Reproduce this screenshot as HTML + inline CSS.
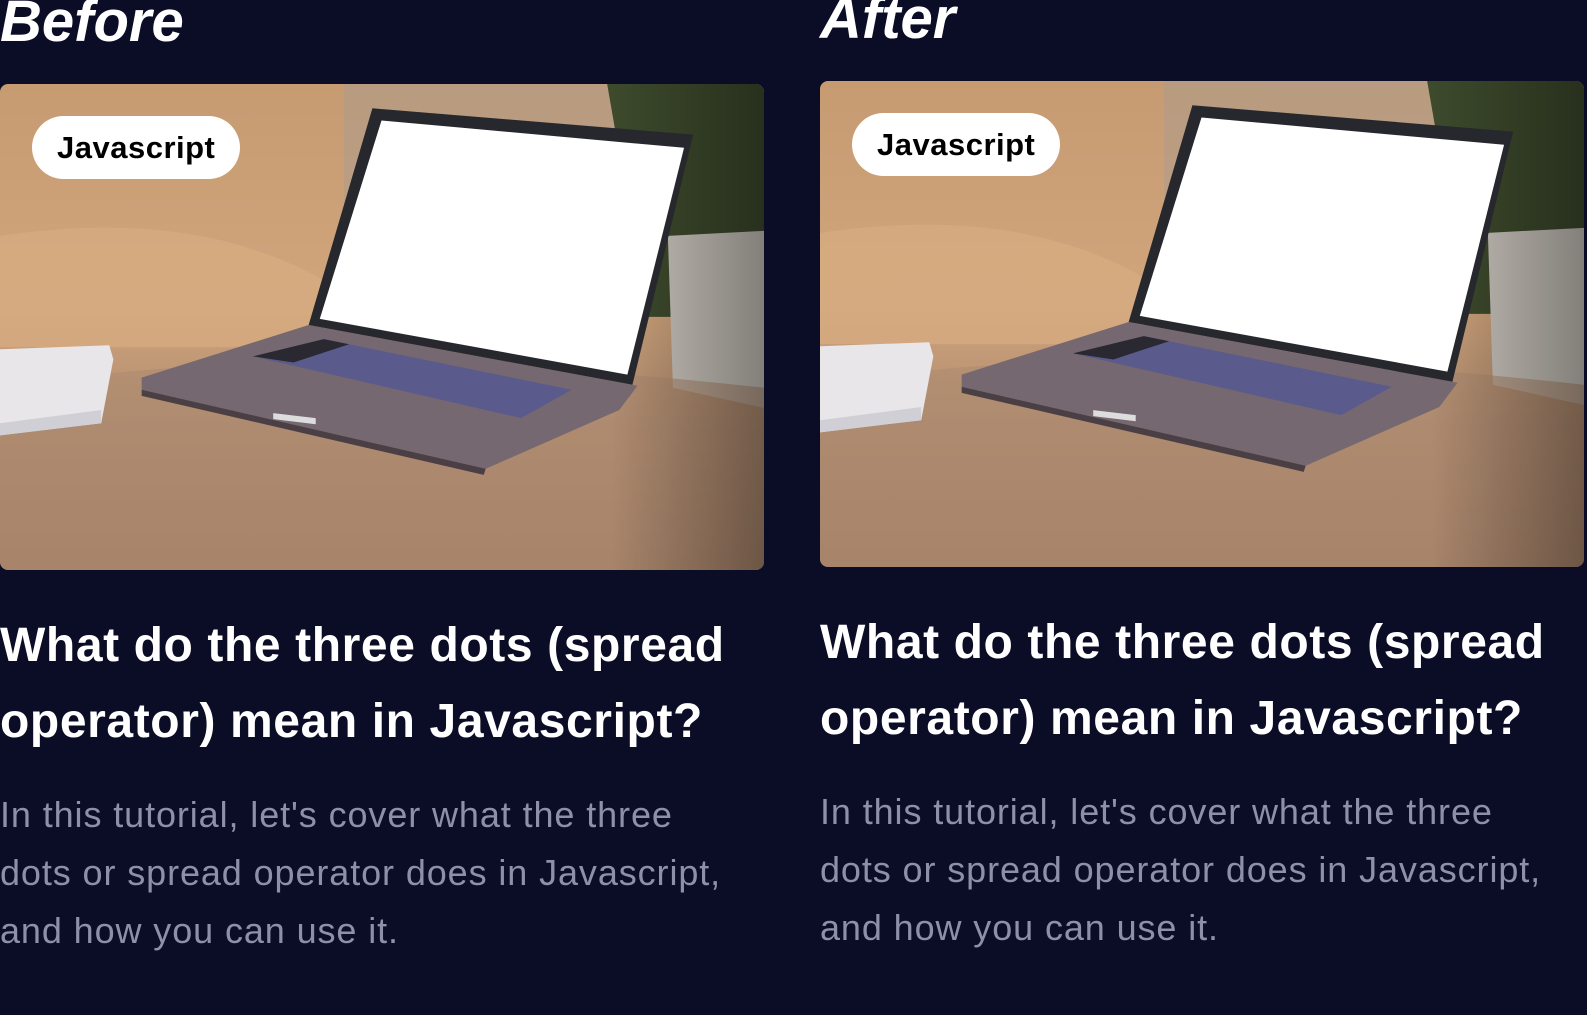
<!DOCTYPE html>
<html><head><meta charset="utf-8"><style>
html,body{margin:0;padding:0;background:#0b0c26;width:1587px;height:1015px;overflow:hidden;font-family:"Liberation Sans",sans-serif;color:#fff}
.col{position:absolute;top:0;width:764px}
.lbl{position:absolute;top:-12px;left:0;font-size:58px;font-weight:bold;font-style:italic;letter-spacing:0px;margin:0}
.ph{position:absolute;left:0;width:764px;height:486px;border-radius:8px;overflow:hidden}
.ph svg{display:block}
.tag{position:absolute;left:32px;top:32px;background:#fff;color:#000;font-size:31px;font-weight:bold;padding:0 25px;height:63px;line-height:63px;border-radius:32px;letter-spacing:0.5px}
h2{position:absolute;left:0;margin:0;font-size:48px;line-height:76px;font-weight:bold;width:800px;letter-spacing:0.6px;white-space:nowrap}
p{position:absolute;left:0;margin:0;font-size:36px;line-height:58px;color:#8e8fa9;width:800px;letter-spacing:0.9px;white-space:nowrap}
</style></head><body>
<div class="col" style="left:0">
<div class="lbl">Before</div>
<div class="ph" style="top:84px">
<svg width="764" height="486" viewBox="0 0 755 480" preserveAspectRatio="none">
<defs>
<linearGradient id="bg" x1="0" y1="0" x2="0" y2="1"><stop offset="0" stop-color="#c79b72"/><stop offset=".45" stop-color="#d1a57c"/><stop offset=".7" stop-color="#b08c70"/><stop offset="1" stop-color="#9e7a62"/></linearGradient>
<linearGradient id="sh" x1="0" y1="0" x2="1" y2="0"><stop offset="0" stop-color="#000" stop-opacity="0"/><stop offset=".8" stop-color="#000" stop-opacity="0"/><stop offset="1" stop-color="#000" stop-opacity=".35"/></linearGradient>
</defs>
<rect width="755" height="480" fill="url(#bg)"/>
<rect x="340" y="0" width="300" height="130" fill="#a99b8e" opacity=".5"/>
<path d="M0 150 Q200 120 330 200 L330 260 L0 260Z" fill="#d8ad82" opacity=".7"/>
<path d="M600 0 L755 0 L755 230 L640 230Z" fill="#3d4a2c"/>
<path d="M660 150 L755 145 L755 320 L665 300Z" fill="#c9c3bb"/>
<path d="M0 300 Q300 250 755 300 L755 480 L0 480Z" fill="#ad8a70" opacity=".6"/>
<rect width="755" height="480" fill="url(#sh)"/>
<polygon points="0,262 108,258 112,272 100,335 0,347" fill="#e8e6e8"/>
<polygon points="0,335 100,322 100,335 0,347" fill="#cfcfd5"/>
<polygon points="140,290 305,238 630,298 612,322 480,380 140,302" fill="#756870"/>
<polygon points="140,302 480,380 478,386 140,308" fill="#4a3f45"/>
<polygon points="250,269 320,252 565,302 515,330" fill="#5b5a8c"/>
<polygon points="250,269 320,252 345,257 290,275" fill="#2a2830"/>
<polygon points="270,325 312,330 312,336 270,331" fill="#ddd"/>
<polygon points="368,24 685,50 625,297 305,238" fill="#26282e"/>
<polygon points="377,36 676,63 620,287 316,232" fill="#fff"/>
</svg>
<div class="tag">Javascript</div>
</div>
<h2 style="top:608px">What do the three dots (spread<br>operator) mean in Javascript?</h2>
<p style="top:786px">In this tutorial, let's cover what the three<br>dots or spread operator does in Javascript,<br>and how you can use it.</p>
</div>
<div class="col" style="left:820px">
<div class="lbl" style="top:-15px">After</div>
<div class="ph" style="top:81px">
<svg width="764" height="486" viewBox="0 0 755 480" preserveAspectRatio="none">
<rect width="755" height="480" fill="url(#bg)"/>
<rect x="340" y="0" width="300" height="130" fill="#a99b8e" opacity=".5"/>
<path d="M0 150 Q200 120 330 200 L330 260 L0 260Z" fill="#d8ad82" opacity=".7"/>
<path d="M600 0 L755 0 L755 230 L640 230Z" fill="#3d4a2c"/>
<path d="M660 150 L755 145 L755 320 L665 300Z" fill="#c9c3bb"/>
<path d="M0 300 Q300 250 755 300 L755 480 L0 480Z" fill="#ad8a70" opacity=".6"/>
<rect width="755" height="480" fill="url(#sh)"/>
<polygon points="0,262 108,258 112,272 100,335 0,347" fill="#e8e6e8"/>
<polygon points="0,335 100,322 100,335 0,347" fill="#cfcfd5"/>
<polygon points="140,290 305,238 630,298 612,322 480,380 140,302" fill="#756870"/>
<polygon points="140,302 480,380 478,386 140,308" fill="#4a3f45"/>
<polygon points="250,269 320,252 565,302 515,330" fill="#5b5a8c"/>
<polygon points="250,269 320,252 345,257 290,275" fill="#2a2830"/>
<polygon points="270,325 312,330 312,336 270,331" fill="#ddd"/>
<polygon points="368,24 685,50 625,297 305,238" fill="#26282e"/>
<polygon points="377,36 676,63 620,287 316,232" fill="#fff"/>
</svg>
<div class="tag">Javascript</div>
</div>
<h2 style="top:605px">What do the three dots (spread<br>operator) mean in Javascript?</h2>
<p style="top:783px">In this tutorial, let's cover what the three<br>dots or spread operator does in Javascript,<br>and how you can use it.</p>
</div>
</body></html>
